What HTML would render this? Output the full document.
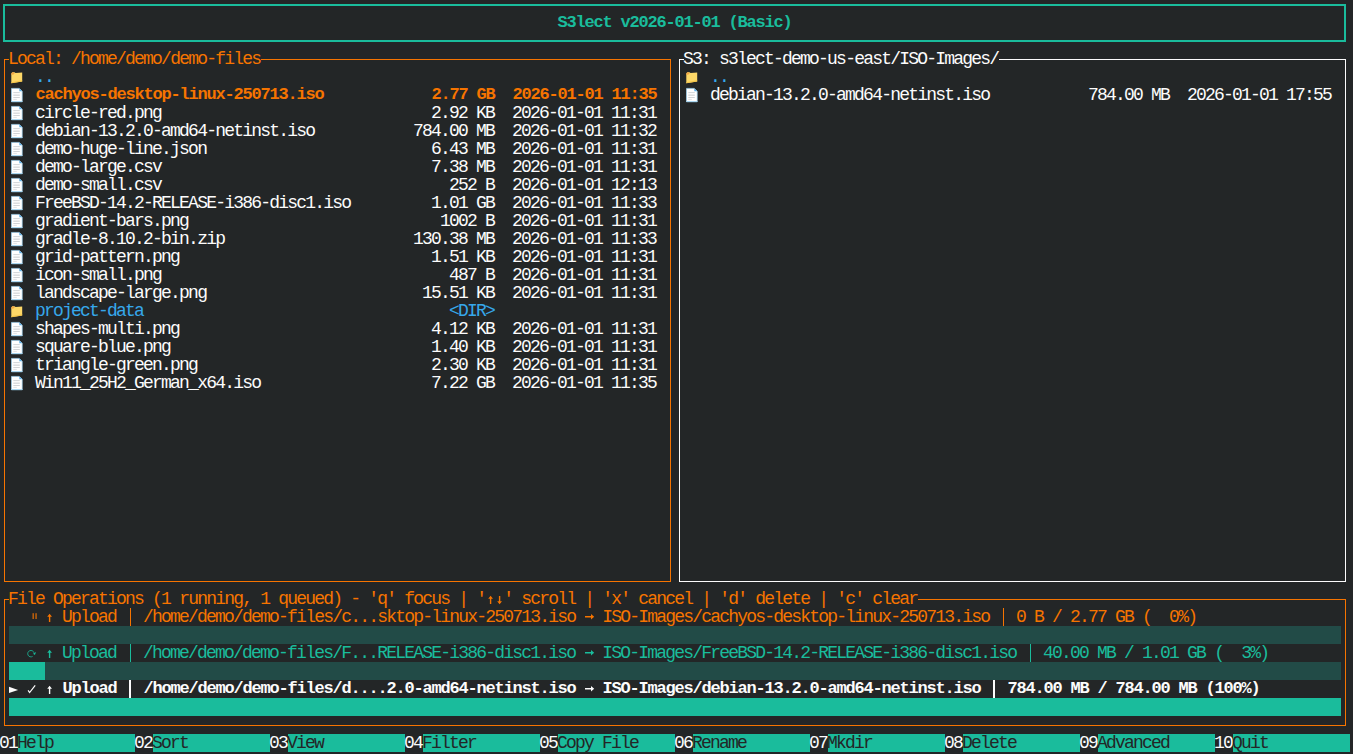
<!DOCTYPE html>
<html><head><meta charset="utf-8"><style>
html,body{margin:0;padding:0}
body{width:1353px;height:754px;background:#232627;overflow:hidden;position:relative;font-family:"Liberation Mono",monospace;font-size:18px}
.t{position:absolute;white-space:pre;line-height:18px;height:18px;letter-spacing:-1.800px}
.r,.b{position:absolute;box-sizing:border-box}
.i{position:absolute;line-height:0}
.i svg{display:block;overflow:visible}
</style></head><body>
<div class="b" style="left:3px;top:4px;width:1343px;height:38px;border:2px solid #1abc9c"></div>
<div class="t" style="left:557.40px;top:14px;color:#1abc9c;font-weight:bold;font-size:17px;letter-spacing:-1.200px;">S3lect v2026-01-01 (Basic)</div>
<div class="b" style="left:4px;top:59px;width:667px;height:523px;border:1px solid #f67400"></div>
<div class="r" style="left:9px;top:50px;width:252px;height:18px;background:#232627"></div>
<div class="t" style="left:8.10px;top:50px;color:#f67400;">Local: /home/demo/demo-files</div>
<div class="b" style="left:679px;top:59px;width:667px;height:523px;border:1px solid #fcfcfc"></div>
<div class="r" style="left:684px;top:50px;width:315px;height:18px;background:#232627"></div>
<div class="t" style="left:683.10px;top:50px;color:#fcfcfc;">S3: s3lect-demo-us-east/ISO-Images/</div>
<div class="i" style="left:11px;top:72px"><svg width="12" height="12" viewBox="0 0 12 12"><path d="M0.3 1.6 L0.3 11.2 L11.2 9.4 L11.2 0.4 L4.6 1.0 L3.4 0.2 L1.4 0.3 Z" fill="#fdd868"/><path d="M0.3 2.0 Q0.4 0.2 2.0 0.2 Q3.6 0.3 3.5 1.7 Q2.4 2.9 0.3 2.7 Z" fill="#f3a644"/><path d="M0.3 10.3 L11.2 8.3 L11.2 9.4 L0.3 11.2 Z" fill="#f2c44a"/></svg></div>
<div class="t" style="left:35.10px;top:68px;color:#36a8eb;">..</div>
<div class="i" style="left:11px;top:88px"><svg width="12" height="15" viewBox="0 0 12 15"><path d="M0.5 0.4 L8.3 0.4 L11.2 3.3 L11.2 13.8 L0.5 13.8 Z" fill="#ffffff" stroke="#9fd3f2" stroke-width="0.7"/><path d="M8.3 0.4 L11.2 3.3 L8.3 3.3 Z" fill="#5aaee8"/><rect x="0.3" y="13" width="11.1" height="1" fill="#a9d6f0"/><rect x="2.3" y="4.2" width="6.5" height="0.9" fill="#cdd0d3"/><rect x="2.3" y="6.6" width="6.5" height="1.1" fill="#cdd0d3"/><rect x="2.3" y="9.1" width="6.5" height="0.9" fill="#cdd0d3"/><rect x="2.3" y="10.9" width="3.5" height="0.8" fill="#dadcde"/></svg></div>
<div class="t" style="left:35.40px;top:86px;color:#f67400;font-weight:bold;font-size:17px;letter-spacing:-1.200px;">cachyos-desktop-linux-250713.iso</div>
<div class="t" style="left:431.40px;top:86px;color:#f67400;font-weight:bold;font-size:17px;letter-spacing:-1.200px;">2.77 GB</div>
<div class="t" style="left:512.40px;top:86px;color:#f67400;font-weight:bold;font-size:17px;letter-spacing:-1.200px;">2026-01-01 11:35</div>
<div class="i" style="left:11px;top:106px"><svg width="12" height="15" viewBox="0 0 12 15"><path d="M0.5 0.4 L8.3 0.4 L11.2 3.3 L11.2 13.8 L0.5 13.8 Z" fill="#ffffff" stroke="#9fd3f2" stroke-width="0.7"/><path d="M8.3 0.4 L11.2 3.3 L8.3 3.3 Z" fill="#5aaee8"/><rect x="0.3" y="13" width="11.1" height="1" fill="#a9d6f0"/><rect x="2.3" y="4.2" width="6.5" height="0.9" fill="#cdd0d3"/><rect x="2.3" y="6.6" width="6.5" height="1.1" fill="#cdd0d3"/><rect x="2.3" y="9.1" width="6.5" height="0.9" fill="#cdd0d3"/><rect x="2.3" y="10.9" width="3.5" height="0.8" fill="#dadcde"/></svg></div>
<div class="t" style="left:35.10px;top:104px;color:#fcfcfc;">circle-red.png</div>
<div class="t" style="left:431.10px;top:104px;color:#fcfcfc;">2.92 KB</div>
<div class="t" style="left:512.10px;top:104px;color:#fcfcfc;">2026-01-01 11:31</div>
<div class="i" style="left:11px;top:124px"><svg width="12" height="15" viewBox="0 0 12 15"><path d="M0.5 0.4 L8.3 0.4 L11.2 3.3 L11.2 13.8 L0.5 13.8 Z" fill="#ffffff" stroke="#9fd3f2" stroke-width="0.7"/><path d="M8.3 0.4 L11.2 3.3 L8.3 3.3 Z" fill="#5aaee8"/><rect x="0.3" y="13" width="11.1" height="1" fill="#a9d6f0"/><rect x="2.3" y="4.2" width="6.5" height="0.9" fill="#cdd0d3"/><rect x="2.3" y="6.6" width="6.5" height="1.1" fill="#cdd0d3"/><rect x="2.3" y="9.1" width="6.5" height="0.9" fill="#cdd0d3"/><rect x="2.3" y="10.9" width="3.5" height="0.8" fill="#dadcde"/></svg></div>
<div class="t" style="left:35.10px;top:122px;color:#fcfcfc;">debian-13.2.0-amd64-netinst.iso</div>
<div class="t" style="left:413.10px;top:122px;color:#fcfcfc;">784.00 MB</div>
<div class="t" style="left:512.10px;top:122px;color:#fcfcfc;">2026-01-01 11:32</div>
<div class="i" style="left:11px;top:142px"><svg width="12" height="15" viewBox="0 0 12 15"><path d="M0.5 0.4 L8.3 0.4 L11.2 3.3 L11.2 13.8 L0.5 13.8 Z" fill="#ffffff" stroke="#9fd3f2" stroke-width="0.7"/><path d="M8.3 0.4 L11.2 3.3 L8.3 3.3 Z" fill="#5aaee8"/><rect x="0.3" y="13" width="11.1" height="1" fill="#a9d6f0"/><rect x="2.3" y="4.2" width="6.5" height="0.9" fill="#cdd0d3"/><rect x="2.3" y="6.6" width="6.5" height="1.1" fill="#cdd0d3"/><rect x="2.3" y="9.1" width="6.5" height="0.9" fill="#cdd0d3"/><rect x="2.3" y="10.9" width="3.5" height="0.8" fill="#dadcde"/></svg></div>
<div class="t" style="left:35.10px;top:140px;color:#fcfcfc;">demo-huge-line.json</div>
<div class="t" style="left:431.10px;top:140px;color:#fcfcfc;">6.43 MB</div>
<div class="t" style="left:512.10px;top:140px;color:#fcfcfc;">2026-01-01 11:31</div>
<div class="i" style="left:11px;top:160px"><svg width="12" height="15" viewBox="0 0 12 15"><path d="M0.5 0.4 L8.3 0.4 L11.2 3.3 L11.2 13.8 L0.5 13.8 Z" fill="#ffffff" stroke="#9fd3f2" stroke-width="0.7"/><path d="M8.3 0.4 L11.2 3.3 L8.3 3.3 Z" fill="#5aaee8"/><rect x="0.3" y="13" width="11.1" height="1" fill="#a9d6f0"/><rect x="2.3" y="4.2" width="6.5" height="0.9" fill="#cdd0d3"/><rect x="2.3" y="6.6" width="6.5" height="1.1" fill="#cdd0d3"/><rect x="2.3" y="9.1" width="6.5" height="0.9" fill="#cdd0d3"/><rect x="2.3" y="10.9" width="3.5" height="0.8" fill="#dadcde"/></svg></div>
<div class="t" style="left:35.10px;top:158px;color:#fcfcfc;">demo-large.csv</div>
<div class="t" style="left:431.10px;top:158px;color:#fcfcfc;">7.38 MB</div>
<div class="t" style="left:512.10px;top:158px;color:#fcfcfc;">2026-01-01 11:31</div>
<div class="i" style="left:11px;top:178px"><svg width="12" height="15" viewBox="0 0 12 15"><path d="M0.5 0.4 L8.3 0.4 L11.2 3.3 L11.2 13.8 L0.5 13.8 Z" fill="#ffffff" stroke="#9fd3f2" stroke-width="0.7"/><path d="M8.3 0.4 L11.2 3.3 L8.3 3.3 Z" fill="#5aaee8"/><rect x="0.3" y="13" width="11.1" height="1" fill="#a9d6f0"/><rect x="2.3" y="4.2" width="6.5" height="0.9" fill="#cdd0d3"/><rect x="2.3" y="6.6" width="6.5" height="1.1" fill="#cdd0d3"/><rect x="2.3" y="9.1" width="6.5" height="0.9" fill="#cdd0d3"/><rect x="2.3" y="10.9" width="3.5" height="0.8" fill="#dadcde"/></svg></div>
<div class="t" style="left:35.10px;top:176px;color:#fcfcfc;">demo-small.csv</div>
<div class="t" style="left:449.10px;top:176px;color:#fcfcfc;">252 B</div>
<div class="t" style="left:512.10px;top:176px;color:#fcfcfc;">2026-01-01 12:13</div>
<div class="i" style="left:11px;top:196px"><svg width="12" height="15" viewBox="0 0 12 15"><path d="M0.5 0.4 L8.3 0.4 L11.2 3.3 L11.2 13.8 L0.5 13.8 Z" fill="#ffffff" stroke="#9fd3f2" stroke-width="0.7"/><path d="M8.3 0.4 L11.2 3.3 L8.3 3.3 Z" fill="#5aaee8"/><rect x="0.3" y="13" width="11.1" height="1" fill="#a9d6f0"/><rect x="2.3" y="4.2" width="6.5" height="0.9" fill="#cdd0d3"/><rect x="2.3" y="6.6" width="6.5" height="1.1" fill="#cdd0d3"/><rect x="2.3" y="9.1" width="6.5" height="0.9" fill="#cdd0d3"/><rect x="2.3" y="10.9" width="3.5" height="0.8" fill="#dadcde"/></svg></div>
<div class="t" style="left:35.10px;top:194px;color:#fcfcfc;">FreeBSD-14.2-RELEASE-i386-disc1.iso</div>
<div class="t" style="left:431.10px;top:194px;color:#fcfcfc;">1.01 GB</div>
<div class="t" style="left:512.10px;top:194px;color:#fcfcfc;">2026-01-01 11:33</div>
<div class="i" style="left:11px;top:214px"><svg width="12" height="15" viewBox="0 0 12 15"><path d="M0.5 0.4 L8.3 0.4 L11.2 3.3 L11.2 13.8 L0.5 13.8 Z" fill="#ffffff" stroke="#9fd3f2" stroke-width="0.7"/><path d="M8.3 0.4 L11.2 3.3 L8.3 3.3 Z" fill="#5aaee8"/><rect x="0.3" y="13" width="11.1" height="1" fill="#a9d6f0"/><rect x="2.3" y="4.2" width="6.5" height="0.9" fill="#cdd0d3"/><rect x="2.3" y="6.6" width="6.5" height="1.1" fill="#cdd0d3"/><rect x="2.3" y="9.1" width="6.5" height="0.9" fill="#cdd0d3"/><rect x="2.3" y="10.9" width="3.5" height="0.8" fill="#dadcde"/></svg></div>
<div class="t" style="left:35.10px;top:212px;color:#fcfcfc;">gradient-bars.png</div>
<div class="t" style="left:440.10px;top:212px;color:#fcfcfc;">1002 B</div>
<div class="t" style="left:512.10px;top:212px;color:#fcfcfc;">2026-01-01 11:31</div>
<div class="i" style="left:11px;top:232px"><svg width="12" height="15" viewBox="0 0 12 15"><path d="M0.5 0.4 L8.3 0.4 L11.2 3.3 L11.2 13.8 L0.5 13.8 Z" fill="#ffffff" stroke="#9fd3f2" stroke-width="0.7"/><path d="M8.3 0.4 L11.2 3.3 L8.3 3.3 Z" fill="#5aaee8"/><rect x="0.3" y="13" width="11.1" height="1" fill="#a9d6f0"/><rect x="2.3" y="4.2" width="6.5" height="0.9" fill="#cdd0d3"/><rect x="2.3" y="6.6" width="6.5" height="1.1" fill="#cdd0d3"/><rect x="2.3" y="9.1" width="6.5" height="0.9" fill="#cdd0d3"/><rect x="2.3" y="10.9" width="3.5" height="0.8" fill="#dadcde"/></svg></div>
<div class="t" style="left:35.10px;top:230px;color:#fcfcfc;">gradle-8.10.2-bin.zip</div>
<div class="t" style="left:413.10px;top:230px;color:#fcfcfc;">130.38 MB</div>
<div class="t" style="left:512.10px;top:230px;color:#fcfcfc;">2026-01-01 11:33</div>
<div class="i" style="left:11px;top:250px"><svg width="12" height="15" viewBox="0 0 12 15"><path d="M0.5 0.4 L8.3 0.4 L11.2 3.3 L11.2 13.8 L0.5 13.8 Z" fill="#ffffff" stroke="#9fd3f2" stroke-width="0.7"/><path d="M8.3 0.4 L11.2 3.3 L8.3 3.3 Z" fill="#5aaee8"/><rect x="0.3" y="13" width="11.1" height="1" fill="#a9d6f0"/><rect x="2.3" y="4.2" width="6.5" height="0.9" fill="#cdd0d3"/><rect x="2.3" y="6.6" width="6.5" height="1.1" fill="#cdd0d3"/><rect x="2.3" y="9.1" width="6.5" height="0.9" fill="#cdd0d3"/><rect x="2.3" y="10.9" width="3.5" height="0.8" fill="#dadcde"/></svg></div>
<div class="t" style="left:35.10px;top:248px;color:#fcfcfc;">grid-pattern.png</div>
<div class="t" style="left:431.10px;top:248px;color:#fcfcfc;">1.51 KB</div>
<div class="t" style="left:512.10px;top:248px;color:#fcfcfc;">2026-01-01 11:31</div>
<div class="i" style="left:11px;top:268px"><svg width="12" height="15" viewBox="0 0 12 15"><path d="M0.5 0.4 L8.3 0.4 L11.2 3.3 L11.2 13.8 L0.5 13.8 Z" fill="#ffffff" stroke="#9fd3f2" stroke-width="0.7"/><path d="M8.3 0.4 L11.2 3.3 L8.3 3.3 Z" fill="#5aaee8"/><rect x="0.3" y="13" width="11.1" height="1" fill="#a9d6f0"/><rect x="2.3" y="4.2" width="6.5" height="0.9" fill="#cdd0d3"/><rect x="2.3" y="6.6" width="6.5" height="1.1" fill="#cdd0d3"/><rect x="2.3" y="9.1" width="6.5" height="0.9" fill="#cdd0d3"/><rect x="2.3" y="10.9" width="3.5" height="0.8" fill="#dadcde"/></svg></div>
<div class="t" style="left:35.10px;top:266px;color:#fcfcfc;">icon-small.png</div>
<div class="t" style="left:449.10px;top:266px;color:#fcfcfc;">487 B</div>
<div class="t" style="left:512.10px;top:266px;color:#fcfcfc;">2026-01-01 11:31</div>
<div class="i" style="left:11px;top:286px"><svg width="12" height="15" viewBox="0 0 12 15"><path d="M0.5 0.4 L8.3 0.4 L11.2 3.3 L11.2 13.8 L0.5 13.8 Z" fill="#ffffff" stroke="#9fd3f2" stroke-width="0.7"/><path d="M8.3 0.4 L11.2 3.3 L8.3 3.3 Z" fill="#5aaee8"/><rect x="0.3" y="13" width="11.1" height="1" fill="#a9d6f0"/><rect x="2.3" y="4.2" width="6.5" height="0.9" fill="#cdd0d3"/><rect x="2.3" y="6.6" width="6.5" height="1.1" fill="#cdd0d3"/><rect x="2.3" y="9.1" width="6.5" height="0.9" fill="#cdd0d3"/><rect x="2.3" y="10.9" width="3.5" height="0.8" fill="#dadcde"/></svg></div>
<div class="t" style="left:35.10px;top:284px;color:#fcfcfc;">landscape-large.png</div>
<div class="t" style="left:422.10px;top:284px;color:#fcfcfc;">15.51 KB</div>
<div class="t" style="left:512.10px;top:284px;color:#fcfcfc;">2026-01-01 11:31</div>
<div class="i" style="left:11px;top:306px"><svg width="12" height="12" viewBox="0 0 12 12"><path d="M0.3 1.6 L0.3 11.2 L11.2 9.4 L11.2 0.4 L4.6 1.0 L3.4 0.2 L1.4 0.3 Z" fill="#fdd868"/><path d="M0.3 2.0 Q0.4 0.2 2.0 0.2 Q3.6 0.3 3.5 1.7 Q2.4 2.9 0.3 2.7 Z" fill="#f3a644"/><path d="M0.3 10.3 L11.2 8.3 L11.2 9.4 L0.3 11.2 Z" fill="#f2c44a"/></svg></div>
<div class="t" style="left:35.10px;top:302px;color:#36a8eb;">project-data</div>
<div class="t" style="left:449.10px;top:302px;color:#36a8eb;">&lt;DIR&gt;</div>
<div class="i" style="left:11px;top:322px"><svg width="12" height="15" viewBox="0 0 12 15"><path d="M0.5 0.4 L8.3 0.4 L11.2 3.3 L11.2 13.8 L0.5 13.8 Z" fill="#ffffff" stroke="#9fd3f2" stroke-width="0.7"/><path d="M8.3 0.4 L11.2 3.3 L8.3 3.3 Z" fill="#5aaee8"/><rect x="0.3" y="13" width="11.1" height="1" fill="#a9d6f0"/><rect x="2.3" y="4.2" width="6.5" height="0.9" fill="#cdd0d3"/><rect x="2.3" y="6.6" width="6.5" height="1.1" fill="#cdd0d3"/><rect x="2.3" y="9.1" width="6.5" height="0.9" fill="#cdd0d3"/><rect x="2.3" y="10.9" width="3.5" height="0.8" fill="#dadcde"/></svg></div>
<div class="t" style="left:35.10px;top:320px;color:#fcfcfc;">shapes-multi.png</div>
<div class="t" style="left:431.10px;top:320px;color:#fcfcfc;">4.12 KB</div>
<div class="t" style="left:512.10px;top:320px;color:#fcfcfc;">2026-01-01 11:31</div>
<div class="i" style="left:11px;top:340px"><svg width="12" height="15" viewBox="0 0 12 15"><path d="M0.5 0.4 L8.3 0.4 L11.2 3.3 L11.2 13.8 L0.5 13.8 Z" fill="#ffffff" stroke="#9fd3f2" stroke-width="0.7"/><path d="M8.3 0.4 L11.2 3.3 L8.3 3.3 Z" fill="#5aaee8"/><rect x="0.3" y="13" width="11.1" height="1" fill="#a9d6f0"/><rect x="2.3" y="4.2" width="6.5" height="0.9" fill="#cdd0d3"/><rect x="2.3" y="6.6" width="6.5" height="1.1" fill="#cdd0d3"/><rect x="2.3" y="9.1" width="6.5" height="0.9" fill="#cdd0d3"/><rect x="2.3" y="10.9" width="3.5" height="0.8" fill="#dadcde"/></svg></div>
<div class="t" style="left:35.10px;top:338px;color:#fcfcfc;">square-blue.png</div>
<div class="t" style="left:431.10px;top:338px;color:#fcfcfc;">1.40 KB</div>
<div class="t" style="left:512.10px;top:338px;color:#fcfcfc;">2026-01-01 11:31</div>
<div class="i" style="left:11px;top:358px"><svg width="12" height="15" viewBox="0 0 12 15"><path d="M0.5 0.4 L8.3 0.4 L11.2 3.3 L11.2 13.8 L0.5 13.8 Z" fill="#ffffff" stroke="#9fd3f2" stroke-width="0.7"/><path d="M8.3 0.4 L11.2 3.3 L8.3 3.3 Z" fill="#5aaee8"/><rect x="0.3" y="13" width="11.1" height="1" fill="#a9d6f0"/><rect x="2.3" y="4.2" width="6.5" height="0.9" fill="#cdd0d3"/><rect x="2.3" y="6.6" width="6.5" height="1.1" fill="#cdd0d3"/><rect x="2.3" y="9.1" width="6.5" height="0.9" fill="#cdd0d3"/><rect x="2.3" y="10.9" width="3.5" height="0.8" fill="#dadcde"/></svg></div>
<div class="t" style="left:35.10px;top:356px;color:#fcfcfc;">triangle-green.png</div>
<div class="t" style="left:431.10px;top:356px;color:#fcfcfc;">2.30 KB</div>
<div class="t" style="left:512.10px;top:356px;color:#fcfcfc;">2026-01-01 11:31</div>
<div class="i" style="left:11px;top:376px"><svg width="12" height="15" viewBox="0 0 12 15"><path d="M0.5 0.4 L8.3 0.4 L11.2 3.3 L11.2 13.8 L0.5 13.8 Z" fill="#ffffff" stroke="#9fd3f2" stroke-width="0.7"/><path d="M8.3 0.4 L11.2 3.3 L8.3 3.3 Z" fill="#5aaee8"/><rect x="0.3" y="13" width="11.1" height="1" fill="#a9d6f0"/><rect x="2.3" y="4.2" width="6.5" height="0.9" fill="#cdd0d3"/><rect x="2.3" y="6.6" width="6.5" height="1.1" fill="#cdd0d3"/><rect x="2.3" y="9.1" width="6.5" height="0.9" fill="#cdd0d3"/><rect x="2.3" y="10.9" width="3.5" height="0.8" fill="#dadcde"/></svg></div>
<div class="t" style="left:35.10px;top:374px;color:#fcfcfc;">Win11_25H2_German_x64.iso</div>
<div class="t" style="left:431.10px;top:374px;color:#fcfcfc;">7.22 GB</div>
<div class="t" style="left:512.10px;top:374px;color:#fcfcfc;">2026-01-01 11:35</div>
<div class="i" style="left:686px;top:72px"><svg width="12" height="12" viewBox="0 0 12 12"><path d="M0.3 1.6 L0.3 11.2 L11.2 9.4 L11.2 0.4 L4.6 1.0 L3.4 0.2 L1.4 0.3 Z" fill="#fdd868"/><path d="M0.3 2.0 Q0.4 0.2 2.0 0.2 Q3.6 0.3 3.5 1.7 Q2.4 2.9 0.3 2.7 Z" fill="#f3a644"/><path d="M0.3 10.3 L11.2 8.3 L11.2 9.4 L0.3 11.2 Z" fill="#f2c44a"/></svg></div>
<div class="t" style="left:710.10px;top:68px;color:#36a8eb;">..</div>
<div class="i" style="left:686px;top:88px"><svg width="12" height="15" viewBox="0 0 12 15"><path d="M0.5 0.4 L8.3 0.4 L11.2 3.3 L11.2 13.8 L0.5 13.8 Z" fill="#ffffff" stroke="#9fd3f2" stroke-width="0.7"/><path d="M8.3 0.4 L11.2 3.3 L8.3 3.3 Z" fill="#5aaee8"/><rect x="0.3" y="13" width="11.1" height="1" fill="#a9d6f0"/><rect x="2.3" y="4.2" width="6.5" height="0.9" fill="#cdd0d3"/><rect x="2.3" y="6.6" width="6.5" height="1.1" fill="#cdd0d3"/><rect x="2.3" y="9.1" width="6.5" height="0.9" fill="#cdd0d3"/><rect x="2.3" y="10.9" width="3.5" height="0.8" fill="#dadcde"/></svg></div>
<div class="t" style="left:710.10px;top:86px;color:#fcfcfc;">debian-13.2.0-amd64-netinst.iso</div>
<div class="t" style="left:1088.10px;top:86px;color:#fcfcfc;">784.00 MB</div>
<div class="t" style="left:1187.10px;top:86px;color:#fcfcfc;">2026-01-01 17:55</div>
<div class="b" style="left:4px;top:599px;width:1342px;height:127px;border:1px solid #f67400"></div>
<div class="r" style="left:9px;top:590px;width:909px;height:18px;background:#232627"></div>
<div class="t" style="left:8.10px;top:590px;color:#f67400;">File Operations (1 running, 1 queued) - &#x27;q&#x27; focus | &#x27;  &#x27; scroll | &#x27;x&#x27; cancel | &#x27;d&#x27; delete | &#x27;c&#x27; clear</div>
<div class="i" style="left:27px;top:608px"><svg width="9" height="18" viewBox="0 0 9 18"><rect x="5.6" y="5.2" width="1.1" height="5.8" fill="#f67400"/><rect x="8.5" y="5.2" width="1.1" height="5.8" fill="#f67400"/></svg></div>
<div class="t" style="left:44.10px;top:608px;color:#f67400;"> </div>
<div class="t" style="left:62.10px;top:608px;color:#f67400;">Upload</div>
<div class="r" style="left:130px;top:608px;width:1px;height:18px;background:#f67400"></div>
<div class="t" style="left:143.10px;top:608px;color:#f67400;">/home/demo/demo-files/c...sktop-linux-250713.iso   ISO-Images/cachyos-desktop-linux-250713.iso</div>
<div class="r" style="left:1003px;top:608px;width:1px;height:18px;background:#f67400"></div>
<div class="t" style="left:1016.10px;top:608px;color:#f67400;">0 B / 2.77 GB (  0%)</div>
<div class="i" style="left:27px;top:644px"><svg width="9" height="18" viewBox="0 0 9 18"><path d="M5.6 12.4 A3.2 3.2 0 1 1 7.0 8.8" fill="none" stroke="#1abc9c" stroke-width="0.8"/><path d="M6.0 9.8 L9.0 7.9 L7.9 11.0 Z" fill="#1abc9c"/></svg></div>
<div class="t" style="left:44.10px;top:644px;color:#1abc9c;"> </div>
<div class="t" style="left:62.10px;top:644px;color:#1abc9c;">Upload</div>
<div class="r" style="left:130px;top:644px;width:1px;height:18px;background:#1abc9c"></div>
<div class="t" style="left:143.10px;top:644px;color:#1abc9c;">/home/demo/demo-files/F...RELEASE-i386-disc1.iso   ISO-Images/FreeBSD-14.2-RELEASE-i386-disc1.iso</div>
<div class="r" style="left:1030px;top:644px;width:1px;height:18px;background:#1abc9c"></div>
<div class="t" style="left:1043.10px;top:644px;color:#1abc9c;">40.00 MB / 1.01 GB (  3%)</div>
<div class="i" style="left:9px;top:680px"><svg width="9" height="18" viewBox="0 0 9 18"><path d="M0 6.8 L9.1 10.1 L0 13.1 Z" fill="#fcfcfc"/></svg></div>
<div class="i" style="left:27px;top:680px"><svg width="9" height="18" viewBox="0 0 9 18"><path d="M1.1 10.4 L2.6 12.6 L8.2 5.3" fill="none" stroke="#fcfcfc" stroke-width="1.2"/></svg></div>
<div class="t" style="left:44.40px;top:680px;color:#fcfcfc;font-weight:bold;font-size:17px;letter-spacing:-1.200px;"> </div>
<div class="t" style="left:62.40px;top:680px;color:#fcfcfc;font-weight:bold;font-size:17px;letter-spacing:-1.200px;">Upload</div>
<div class="r" style="left:129px;top:680px;width:2px;height:18px;background:#fcfcfc"></div>
<div class="t" style="left:143.40px;top:680px;color:#fcfcfc;font-weight:bold;font-size:17px;letter-spacing:-1.200px;">/home/demo/demo-files/d....2.0-amd64-netinst.iso   ISO-Images/debian-13.2.0-amd64-netinst.iso</div>
<div class="r" style="left:993px;top:680px;width:2px;height:18px;background:#fcfcfc"></div>
<div class="t" style="left:1007.40px;top:680px;color:#fcfcfc;font-weight:bold;font-size:17px;letter-spacing:-1.200px;">784.00 MB / 784.00 MB (100%)</div>
<div class="r" style="left:9px;top:626px;width:1332px;height:18px;background:#224b47"></div>
<div class="r" style="left:9px;top:662px;width:36px;height:18px;background:#1abc9c"></div>
<div class="r" style="left:45px;top:662px;width:1296px;height:18px;background:#224b47"></div>
<div class="r" style="left:9px;top:698px;width:1332px;height:18px;background:#1abc9c"></div>
<div class="r" style="left:18px;top:734px;width:117px;height:18px;background:#1abc9c"></div>
<div class="t" style="left:-0.90px;top:734px;color:#fcfcfc;">01</div>
<div class="t" style="left:17.10px;top:734px;color:#232627;">Help</div>
<div class="r" style="left:153px;top:734px;width:117px;height:18px;background:#1abc9c"></div>
<div class="t" style="left:134.10px;top:734px;color:#fcfcfc;">02</div>
<div class="t" style="left:152.10px;top:734px;color:#232627;">Sort</div>
<div class="r" style="left:288px;top:734px;width:117px;height:18px;background:#1abc9c"></div>
<div class="t" style="left:269.10px;top:734px;color:#fcfcfc;">03</div>
<div class="t" style="left:287.10px;top:734px;color:#232627;">View</div>
<div class="r" style="left:423px;top:734px;width:117px;height:18px;background:#1abc9c"></div>
<div class="t" style="left:404.10px;top:734px;color:#fcfcfc;">04</div>
<div class="t" style="left:422.10px;top:734px;color:#232627;">Filter</div>
<div class="r" style="left:558px;top:734px;width:117px;height:18px;background:#1abc9c"></div>
<div class="t" style="left:539.10px;top:734px;color:#fcfcfc;">05</div>
<div class="t" style="left:557.10px;top:734px;color:#232627;">Copy File</div>
<div class="r" style="left:693px;top:734px;width:117px;height:18px;background:#1abc9c"></div>
<div class="t" style="left:674.10px;top:734px;color:#fcfcfc;">06</div>
<div class="t" style="left:692.10px;top:734px;color:#232627;">Rename</div>
<div class="r" style="left:828px;top:734px;width:117px;height:18px;background:#1abc9c"></div>
<div class="t" style="left:809.10px;top:734px;color:#fcfcfc;">07</div>
<div class="t" style="left:827.10px;top:734px;color:#232627;">Mkdir</div>
<div class="r" style="left:963px;top:734px;width:117px;height:18px;background:#1abc9c"></div>
<div class="t" style="left:944.10px;top:734px;color:#fcfcfc;">08</div>
<div class="t" style="left:962.10px;top:734px;color:#232627;">Delete</div>
<div class="r" style="left:1098px;top:734px;width:117px;height:18px;background:#1abc9c"></div>
<div class="t" style="left:1079.10px;top:734px;color:#fcfcfc;">09</div>
<div class="t" style="left:1097.10px;top:734px;color:#232627;">Advanced</div>
<div class="r" style="left:1233px;top:734px;width:117px;height:18px;background:#1abc9c"></div>
<div class="t" style="left:1214.10px;top:734px;color:#fcfcfc;">10</div>
<div class="t" style="left:1232.10px;top:734px;color:#232627;">Quit</div>
<div class="i" style="left:486px;top:590px"><svg width="9" height="18" viewBox="0 0 9 18"><path d="M4.6 5.8 L7.0 8.8 L5.3 8.8 L5.3 14 L3.9 14 L3.9 8.8 L2.2 8.8 Z" fill="#f67400"/></svg></div>
<div class="i" style="left:495px;top:590px"><svg width="9" height="18" viewBox="0 0 9 18"><path d="M4.6 14.2 L7.0 11.2 L5.3 11.2 L5.3 6 L3.9 6 L3.9 11.2 L2.2 11.2 Z" fill="#f67400"/></svg></div>
<div class="i" style="left:45px;top:608px"><svg width="9" height="18" viewBox="0 0 9 18"><path d="M4.6 5.8 L7.0 8.8 L5.3 8.8 L5.3 14 L3.9 14 L3.9 8.8 L2.2 8.8 Z" fill="#f67400"/></svg></div>
<div class="i" style="left:585px;top:608px"><svg width="9" height="18" viewBox="0 0 9 18"><path d="M0 8 L6 8 L6 6 L9.2 8.7 L6 11.4 L6 9.4 L0 9.4 Z" fill="#f67400"/></svg></div>
<div class="i" style="left:45px;top:644px"><svg width="9" height="18" viewBox="0 0 9 18"><path d="M4.6 5.8 L7.0 8.8 L5.3 8.8 L5.3 14 L3.9 14 L3.9 8.8 L2.2 8.8 Z" fill="#1abc9c"/></svg></div>
<div class="i" style="left:585px;top:644px"><svg width="9" height="18" viewBox="0 0 9 18"><path d="M0 8 L6 8 L6 6 L9.2 8.7 L6 11.4 L6 9.4 L0 9.4 Z" fill="#1abc9c"/></svg></div>
<div class="i" style="left:45px;top:680px"><svg width="9" height="18" viewBox="0 0 9 18"><path d="M4.6 5.8 L7.0 8.8 L5.3 8.8 L5.3 14 L3.9 14 L3.9 8.8 L2.2 8.8 Z" fill="#fcfcfc"/></svg></div>
<div class="i" style="left:585px;top:680px"><svg width="9" height="18" viewBox="0 0 9 18"><path d="M0 8 L6 8 L6 6 L9.2 8.7 L6 11.4 L6 9.4 L0 9.4 Z" fill="#fcfcfc"/></svg></div>
</body></html>
